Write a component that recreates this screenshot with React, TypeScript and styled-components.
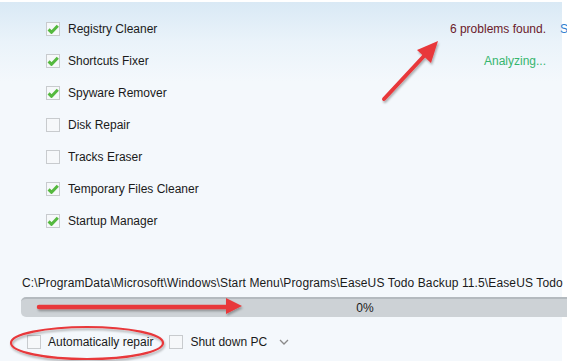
import React from 'react';
import styled, { createGlobalStyle } from 'styled-components';

const GlobalStyle = createGlobalStyle`
  html, body {
    margin: 0;
    padding: 0;
    overflow: hidden;
  }
  body {
    font-family: "Liberation Sans", Tahoma, Arial, sans-serif;
    font-size: 12px;
    color: #1a1a1a;
  }
`;

const tools = [
  { name: 'Registry Cleaner', checked: true },
  { name: 'Shortcuts Fixer', checked: true },
  { name: 'Spyware Remover', checked: true },
  { name: 'Disk Repair', checked: false },
  { name: 'Tracks Eraser', checked: false },
  { name: 'Temporary Files Cleaner', checked: true },
  { name: 'Startup Manager', checked: true },
];

const Check = ({ checked }: { checked: boolean }) => (
  <Box>
    {checked && (
      <svg width="12" height="12" viewBox="0 0 12 12">
        <path d="M1.6 6.4 L4.6 9.3 L10.8 2.8" fill="none" stroke="#55b93f" strokeWidth="3" strokeLinejoin="round" />
      </svg>
    )}
  </Box>
);

export default function App() {
  return (
    <>
      <GlobalStyle />
      <Window>
        <Panel>
          <Top>
            <ToolList>
              {tools.map((t) => (
                <ToolRow key={t.name}>
                  <Check checked={t.checked} />
                  <span>{t.name}</span>
                </ToolRow>
              ))}
            </ToolList>
            <Status>
              <StatusRow>
                <Problems>6 problems found.</Problems>
                <LinkText>S</LinkText>
              </StatusRow>
              <Analyzing>Analyzing...</Analyzing>
            </Status>
          </Top>
          <PathClip>
            <PathText>C:\ProgramData\Microsoft\Windows\Start Menu\Programs\EaseUS Todo Backup 11.5\EaseUS Todo</PathText>
          </PathClip>
          <ProgressBar>0%</ProgressBar>
          <Footer>
            <Option>
              <Check checked={false} />
              <span>Automatically repair</span>
            </Option>
            <Option>
              <Check checked={false} />
              <span>Shut down PC</span>
              <Chevron width="10" height="6" viewBox="0 0 10 6">
                <path d="M1 1 L5 5 L9 1" fill="none" stroke="#8a8a8a" strokeWidth="1.3" />
              </Chevron>
            </Option>
          </Footer>
        </Panel>
        <Marks width="567" height="361" viewBox="0 0 567 361">
          <defs>
            <filter id="sh" x="-20%" y="-20%" width="140%" height="140%">
              <feDropShadow dx="1" dy="2" stdDeviation="1.2" floodColor="#000" floodOpacity="0.3" />
            </filter>
          </defs>
          <g filter="url(#sh)" fill="#e8383b" stroke="#e8383b" strokeLinecap="round">
            <line x1="384" y1="99" x2="424" y2="56" strokeWidth="4" />
            <polygon points="438,41 431,63 417,50" stroke="none" />
            <line x1="39" y1="307" x2="228" y2="307" strokeWidth="4.5" />
            <polygon points="242,306 226,298 226,314" stroke="none" />
          </g>
          <ellipse cx="87" cy="343" rx="76" ry="16" fill="none" stroke="#e8383b" strokeWidth="2.2" filter="url(#sh)" />
        </Marks>
      </Window>
    </>
  );
}

const Window = styled.div`
  position: relative;
  width: 567px;
  height: 361px;
  background: #ffffff;
  overflow: hidden;
`;

const Panel = styled.div`
  width: 562px;
  height: 361px;
  margin-top: 2px;
  background: linear-gradient(#d9e9f5 0px, #eaf3fa 40px, #f4f8fc 80px, #f4f8fc 100%);
  display: flex;
  flex-direction: column;
`;

const Top = styled.div`
  display: flex;
  justify-content: space-between;
  height: 274px;
  flex-shrink: 0;
`;

const ToolList = styled.div`
  display: flex;
  flex-direction: column;
  gap: 18px;
  padding: 20px 0 0 46px;
`;

const ToolRow = styled.div`
  display: flex;
  align-items: center;
  gap: 8px;
  height: 14px;
`;

const Box = styled.div`
  width: 12px;
  height: 12px;
  border: 1px solid #c8cbce;
  background: #f6f8fa;
  display: flex;
  align-items: center;
  justify-content: center;
  flex-shrink: 0;
`;

const Status = styled.div`
  display: flex;
  flex-direction: column;
  align-items: flex-end;
  gap: 18px;
  padding-top: 20px;
`;

const StatusRow = styled.div`
  display: flex;
  gap: 14px;
`;

const Problems = styled.span`
  color: #6b1a2a;
`;

const LinkText = styled.span`
  color: #2f7fd0;
  width: 2px;
  overflow: visible;
`;

const Analyzing = styled.span`
  color: #36b56e;
  margin-right: 16px;
`;

const PathClip = styled.div`
  height: 21px;
  padding-left: 22px;
  flex-shrink: 0;
`;

const PathText = styled.div`
  white-space: nowrap;
  line-height: 14px;
  letter-spacing: 0.12px;
`;

const ProgressBar = styled.div`
  margin-left: 21px;
  width: 688px;
  height: 20px;
  box-sizing: border-box;
  border-top: 2px solid #b4babf;
  background: #cdd2d6;
  border-radius: 5px 0 0 5px;
  text-align: center;
  line-height: 18px;
  flex-shrink: 0;
`;

const Footer = styled.div`
  display: flex;
  align-items: center;
  gap: 16px;
  padding: 18px 0 0 27px;
`;

const Option = styled.div`
  display: flex;
  align-items: center;
  gap: 7px;
`;

const Chevron = styled.svg`
  margin-left: 5px;
`;

const Marks = styled.svg`
  position: absolute;
  left: 0;
  top: 0;
  pointer-events: none;
`;
